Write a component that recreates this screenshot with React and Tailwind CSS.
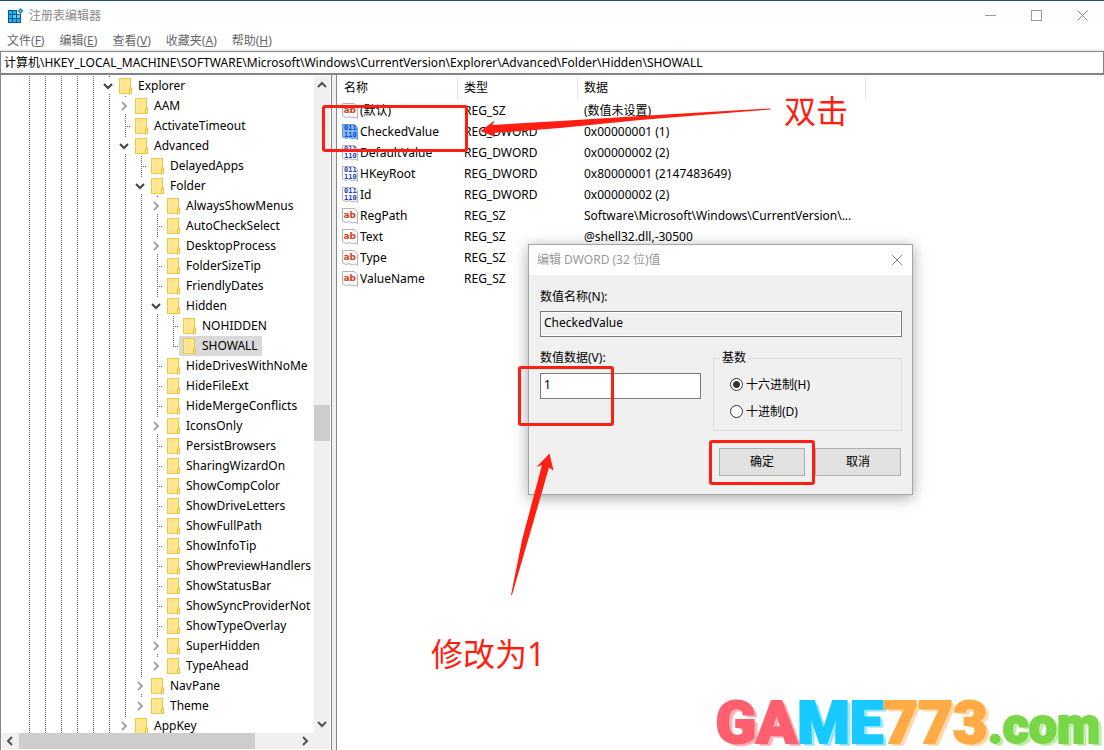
import { useState } from "react";

const tree = [
  { name: "Explorer", level: 0, open: true },
  { name: "AAM", level: 1, closed: true },
  { name: "ActivateTimeout", level: 1 },
  { name: "Advanced", level: 1, open: true },
  { name: "DelayedApps", level: 2 },
  { name: "Folder", level: 2, open: true },
  { name: "AlwaysShowMenus", level: 3, closed: true },
  { name: "AutoCheckSelect", level: 3 },
  { name: "DesktopProcess", level: 3, closed: true },
  { name: "FolderSizeTip", level: 3 },
  { name: "FriendlyDates", level: 3 },
  { name: "Hidden", level: 3, open: true },
  { name: "NOHIDDEN", level: 4 },
  { name: "SHOWALL", level: 4, last: true },
  { name: "HideDrivesWithNoMe", level: 3 },
  { name: "HideFileExt", level: 3 },
  { name: "HideMergeConflicts", level: 3 },
  { name: "IconsOnly", level: 3, closed: true },
  { name: "PersistBrowsers", level: 3 },
  { name: "SharingWizardOn", level: 3 },
  { name: "ShowCompColor", level: 3 },
  { name: "ShowDriveLetters", level: 3 },
  { name: "ShowFullPath", level: 3 },
  { name: "ShowInfoTip", level: 3 },
  { name: "ShowPreviewHandlers", level: 3 },
  { name: "ShowStatusBar", level: 3 },
  { name: "ShowSyncProviderNot", level: 3 },
  { name: "ShowTypeOverlay", level: 3 },
  { name: "SuperHidden", level: 3, closed: true },
  { name: "TypeAhead", level: 3, closed: true, last: true },
  { name: "NavPane", level: 2, closed: true },
  { name: "Theme", level: 2, closed: true, last: true },
  { name: "AppKey", level: 1, closed: true },
];

const values = [
  { name: "(默认)", type: "REG_SZ", data: "(数值未设置)" },
  { name: "CheckedValue", type: "REG_DWORD", data: "0x00000001 (1)" },
  { name: "DefaultValue", type: "REG_DWORD", data: "0x00000002 (2)" },
  { name: "HKeyRoot", type: "REG_DWORD", data: "0x80000001 (2147483649)" },
  { name: "Id", type: "REG_DWORD", data: "0x00000002 (2)" },
  { name: "RegPath", type: "REG_SZ", data: "Software\\Microsoft\\Windows\\CurrentVersion\\..." },
  { name: "Text", type: "REG_SZ", data: "@shell32.dll,-30500" },
  { name: "Type", type: "REG_SZ", data: "" },
  { name: "ValueName", type: "REG_SZ", data: "" },
];

const menus = [
  ["文件", "F"],
  ["编辑", "E"],
  ["查看", "V"],
  ["收藏夹", "A"],
  ["帮助", "H"],
];

const arrows = {
  up: "M1 7 L5 3 L9 7",
  down: "M1 3 L5 7 L9 3",
  left: "M7 1 L3 5 L7 9",
  right: "M3 1 L7 5 L3 9",
};

function Chevron({ dir, color = "#505050" }) {
  return (
    <svg width="10" height="10" viewBox="0 0 10 10" className="shrink-0">
      <path d={arrows[dir]} fill="none" stroke={color} strokeWidth="2" />
    </svg>
  );
}

function RegeditIcon() {
  return (
    <svg width="16" height="16" viewBox="0 0 16 16">
      <path d="M0 2 H9 V6 H13 V15 H0 Z" fill="#0b5a8c" />
      <g fill="#22b2f0">
        <rect x="1" y="3" width="3" height="3" />
        <rect x="5" y="3" width="3" height="3" />
        <rect x="1" y="7" width="3" height="3" />
        <rect x="5" y="7" width="3" height="3" fill="#5cd0fa" />
        <rect x="9" y="7" width="3" height="3" fill="#5cd0fa" />
        <rect x="1" y="11" width="3" height="3" />
        <rect x="5" y="11" width="3" height="3" />
        <rect x="9" y="11" width="3" height="3" />
      </g>
      <path d="M12.500 0 L15.500 3 L12.500 6 L9.500 3 Z" fill="#1d86bd" />
      <path d="M12.500 1.800 L13.700 3 L12.500 4.200 L11.300 3 Z" fill="#5cc8f5" />
    </svg>
  );
}

function FolderIcon() {
  return (
    <svg width="14" height="16" viewBox="0 0 14 16" className="shrink-0">
      <rect x="0.5" y="0.5" width="11" height="15" fill="#ffe68f" stroke="#ecc84d" />
      <path d="M10.5 15.5 V10.5 L12.5 9.5 V15.5 Z" fill="#ffe68f" stroke="#e8bf3f" />
    </svg>
  );
}

function ValueIcon({ dword, selected }) {
  return (
    <svg width="16" height="16" viewBox="0 0 16 16" className="shrink-0">
      <path
        d="M0.5 0.5 H12 L15.5 3.5 V15.5 L13 14 L10 15 L7 13.5 L4 14.5 L0.5 13 Z"
        fill={selected ? "#7dbdf0" : "#fbfbfb"}
        stroke={selected ? "#5a9fd8" : "#b4b4b4"}
      />
      {dword ? (
        <g fill="#1c3fd0" fontFamily="DejaVu Sans Mono" fontSize="7" fontWeight="700">
          <text x="2" y="6">011</text>
          <text x="2" y="12.5">110</text>
        </g>
      ) : (
        <text x="1.5" y="10" fill="#d2451e" fontFamily="DejaVu Sans" fontSize="9" fontWeight="700">
          ab
        </text>
      )}
    </svg>
  );
}

function TreeRow({ item, selected, onSelect }) {
  const parents = [...Array(item.level + 5)];
  const arrow = item.open || item.closed;

  return (
    <li className="flex h-5 pl-[18px]">
      {parents.map((_, i) => (
        <span key={i} className="w-4 shrink-0 pl-[10px]">
          <span className="block h-full w-px bg-[repeating-linear-gradient(#6b6b6b_0_1px,transparent_1px_2px)]" />
        </span>
      ))}
      {arrow ? (
        <span className="flex w-4 shrink-0 flex-col pl-[10px]">
          <span className="h-0.5 w-px bg-[linear-gradient(#6b6b6b_0_1px,transparent_1px)]" />
          <span className="-ml-[7px] flex h-4 w-3 items-center justify-center">
            <Chevron dir={item.open ? "down" : "right"} color={item.open ? "#404040" : "#a6a6a6"} />
          </span>
          {!item.last && <span className="h-0.5 w-px bg-[linear-gradient(#6b6b6b_0_1px,transparent_1px)]" />}
        </span>
      ) : (
        <span className="flex w-4 shrink-0 items-start pl-[10px]">
          <span
            className={`w-px bg-[repeating-linear-gradient(#6b6b6b_0_1px,transparent_1px_2px)] ${
              item.last ? "h-[11px]" : "h-full"
            }`}
          />
          <span className="mt-[10px] ml-px h-px w-1 bg-[repeating-linear-gradient(90deg,#6b6b6b_0_1px,transparent_1px_2px)]" />
        </span>
      )}
      <button
        onClick={onSelect}
        className={`flex items-center gap-[5px] pr-1 pl-1 whitespace-nowrap ${selected ? "bg-[#d9d9d9]" : ""}`}
      >
        <FolderIcon />
        {item.name}
      </button>
    </li>
  );
}

function EditDialog() {
  const [base, setBase] = useState("hex");
  const [value, setValue] = useState("1");

  return (
    <section
      role="dialog"
      className="absolute top-[243px] left-[528px] w-[385px] border border-[#a5a5a5] bg-[#f0f0f0] shadow-[0_3px_14px_rgba(0,0,0,0.35)]"
    >
      <header className="flex h-[30px] items-center justify-between bg-white pr-[9px] pl-2 text-[#999]">
        <h2>编辑 DWORD (32 位)值</h2>
        <button aria-label="关闭">
          <svg width="12" height="12" viewBox="0 0 12 12" stroke="#888" fill="none">
            <path d="M1 1 L11 11 M11 1 L1 11" />
          </svg>
        </button>
      </header>

      <div className="pt-3 pr-[10px] pb-[18px] pl-[11px]">
        <label htmlFor="value-name" className="block h-6 leading-5">
          数值名称(N):
        </label>
        <input
          id="value-name"
          readOnly
          value="CheckedValue"
          className="block h-[26px] w-full border border-[#7a7a7a] px-[3px] pb-1 outline-none ring-1 ring-white ring-inset"
        />

        <div className="mt-[11px] flex gap-3">
          <div className="w-[161px]">
            <label htmlFor="value-data" className="block h-[25px] leading-5">
              数值数据(V):
            </label>
            <input
              id="value-data"
              value={value}
              onChange={(e) => setValue(e.target.value)}
              className="block h-[26px] w-full border border-[#7a7a7a] bg-white px-[3px] pb-1 outline-none"
            />
          </div>
          <fieldset className="flex-1 border border-[#dcdcdc] pt-[3px] pb-[5px] pl-4">
            <legend className="-ml-[10px] px-[2px] leading-5">基数</legend>
            {[
              ["hex", "十六进制(H)"],
              ["dec", "十进制(D)"],
            ].map(([key, label]) => (
              <label key={key} className="flex h-[27px] items-center gap-[3px]">
                <input
                  type="radio"
                  name="base"
                  checked={base === key}
                  onChange={() => setBase(key)}
                  className="size-[13px] appearance-none rounded-full border border-[#333] bg-white checked:bg-[radial-gradient(circle,#333_0_3px,white_4px)]"
                />
                {label}
              </label>
            ))}
          </fieldset>
        </div>

        <div className="mt-[17px] flex justify-end gap-[10px] pr-px">
          <button className="h-[28px] w-[86px] border border-[#adadad] bg-[#e1e1e1]">确定</button>
          <button className="h-[28px] w-[86px] border border-[#adadad] bg-[#e1e1e1]">取消</button>
        </div>
      </div>
    </section>
  );
}

function Annotations() {
  return (
    <div className="pointer-events-none text-[32px] leading-10 text-[#ff1f12]">
      <div className="absolute top-[104px] left-[322px] h-[47px] w-[146px] rounded-[3px] border-3 border-[#ff1f12]" />
      <div className="absolute top-[365px] left-[518px] h-[60px] w-[96px] rounded-[3px] border-3 border-[#ff1f12]" />
      <div className="absolute top-[439px] left-[709px] h-[45px] w-[106px] rounded-[3px] border-3 border-[#ff1f12]" />
      <svg className="absolute top-[105px] left-[480px]" width="292" height="34" viewBox="480 106 292 34">
        <path
          d="M480.500 131 L494.500 120.500 L492.500 125 L560 121 L640 116 L770.500 108.500 V109.500 L640 120 L560 128 L493 133 L495 137 Z"
          fill="#ff1f12"
        />
      </svg>
      <svg className="absolute top-[451px] left-[508px]" width="48" height="146" viewBox="508 452 48 146">
        <path
          d="M549.500 453.500 L553.500 470.500 L549 467.500 L531 530 L512 595 H511 L522 540 L542 465 L536.500 467 Z"
          fill="#ff1f12"
        />
      </svg>
      <p className="absolute top-[90px] left-[784px]">双击</p>
      <p className="absolute top-[633px] left-[431px]">修改为1</p>
    </div>
  );
}

function Watermark() {
  return (
    <p className="pointer-events-none absolute right-1 bottom-0 flex items-baseline font-['Roboto',sans-serif] text-[60px] leading-[48px] font-black [-webkit-text-stroke-width:2px]">
      <span className="text-[#ff5f6f] [text-shadow:2px_1px_#ffc4c9,3px_2px_#ffa3ab,4px_3px_#ffc4c9]">GA</span>
      <span className="text-[#18c9ff] [text-shadow:2px_1px_#b5eeff,3px_2px_#84e2ff,4px_3px_#b5eeff]">ME</span>
      <span className="text-[#ffab45] [text-shadow:2px_1px_#ffe2c0,3px_2px_#ffd19b,4px_3px_#ffe2c0]">773</span>
      <span className="text-[50px] text-[#79d647] [text-shadow:2px_1px_#d2f2c2,3px_2px_#b3e898,4px_3px_#d2f2c2]">.com</span>
    </p>
  );
}

function App() {
  const [selected, setSelected] = useState("SHOWALL");

  return (
    <main className="relative flex h-screen w-full flex-col overflow-hidden border-t border-[#1f5068] bg-white font-['Noto_Sans','Noto_Sans_CJK_SC',sans-serif] text-[12px] text-black">
      {/* Title bar */}
      <header className="flex h-[30px] shrink-0 items-start justify-between">
        <div className="flex h-[30px] items-center gap-[5px] pl-2 text-[#8a8a8a]">
          <RegeditIcon />
          <h1>注册表编辑器</h1>
        </div>
        <div className="flex">
          <button aria-label="最小化" className="flex h-7 w-[45px] items-center justify-center">
            <svg width="11" height="11" stroke="#999"><path d="M0 5.500 H11" /></svg>
          </button>
          <button aria-label="最大化" className="flex h-7 w-[47px] items-center justify-center">
            <svg width="11" height="11" stroke="#999" fill="none"><rect x="0.5" y="0.5" width="10" height="10" /></svg>
          </button>
          <button aria-label="关闭" className="flex h-7 w-[44px] items-center justify-center">
            <svg width="11" height="11" stroke="#888"><path d="M0.500 0.500 L10.500 10.500 M10.500 0.500 L0.500 10.500" /></svg>
          </button>
        </div>
      </header>

      {/* Menu */}
      <nav className="flex h-[18px] shrink-0 items-center gap-[15px] pt-0.5 pl-[7px] text-[#666]">
        {menus.map(([name, letter]) => (
          <button key={letter}>
            {name}(<u>{letter}</u>)
          </button>
        ))}
      </nav>

      <div className="shrink-0 border-t-2 border-[#f0f0f0]">
        <input
          aria-label="地址"
          readOnly
          value="计算机\HKEY_LOCAL_MACHINE\SOFTWARE\Microsoft\Windows\CurrentVersion\Explorer\Advanced\Folder\Hidden\SHOWALL"
          className="block h-6 w-full border border-b-2 border-[#828287] bg-white px-[3px] pb-px outline-none"
        />
      </div>

      <div className="flex min-h-0 flex-1">
        {/* Key tree */}
        <aside className="flex w-[332px] shrink-0 flex-col border-x border-[#828790] pt-px pr-px">
          <div className="flex min-h-0 flex-1">
            <ul className="min-w-0 flex-1 overflow-hidden">
              {tree.map((item) => (
                <TreeRow
                  key={item.name}
                  item={item}
                  selected={item.name === selected}
                  onSelect={() => setSelected(item.name)}
                />
              ))}
            </ul>
            <div className="flex w-4 shrink-0 flex-col items-center bg-[#f0f0f0] py-1">
              <Chevron dir="up" />
              <div className="mt-[315px] h-9 w-full bg-[#cdcdcd]" />
              <div className="flex-1" />
              <Chevron dir="down" />
            </div>
          </div>
          <div className="mb-px ml-px flex h-4 shrink-0 items-center bg-[#f0f0f0] pr-5 pl-[3px]">
            <Chevron dir="left" />
            <div className="ml-1 h-full w-[236px] bg-[#cdcdcd]" />
            <div className="flex-1" />
            <Chevron dir="right" />
          </div>
        </aside>

        <div className="w-1 shrink-0 bg-[#f0f0f0]" />

        {/* Values */}
        <section className="min-w-0 flex-1 border-l border-[#828790] pt-px">
          <table className="w-[529px] table-fixed border-separate border-spacing-0 text-left whitespace-nowrap">
            <thead>
              <tr className="h-6">
                <th className="w-[121px] border-r border-[#e5e5e5] p-0 pl-[7px] font-normal">名称</th>
                <th className="w-[120px] border-r border-[#e5e5e5] p-0 pl-[6px] font-normal">类型</th>
                <th className="border-r border-[#e5e5e5] p-0 pl-[6px] font-normal">数据</th>
              </tr>
            </thead>
            <tbody>
              {values.map((row) => (
                <tr key={row.name} className="h-[21px]">
                  <td className="p-0 pl-[5px]">
                    <div className="flex items-center gap-[2px]">
                      <ValueIcon dword={row.type === "REG_DWORD"} selected={row.name === "CheckedValue"} />
                      {row.name}
                    </div>
                  </td>
                  <td className="p-0 pl-[6px]">{row.type}</td>
                  <td className="p-0 pl-[6px]">{row.data}</td>
                </tr>
              ))}
            </tbody>
          </table>
        </section>
      </div>

      <EditDialog />
      <Annotations />
      <Watermark />
    </main>
  );
}

export default App;
